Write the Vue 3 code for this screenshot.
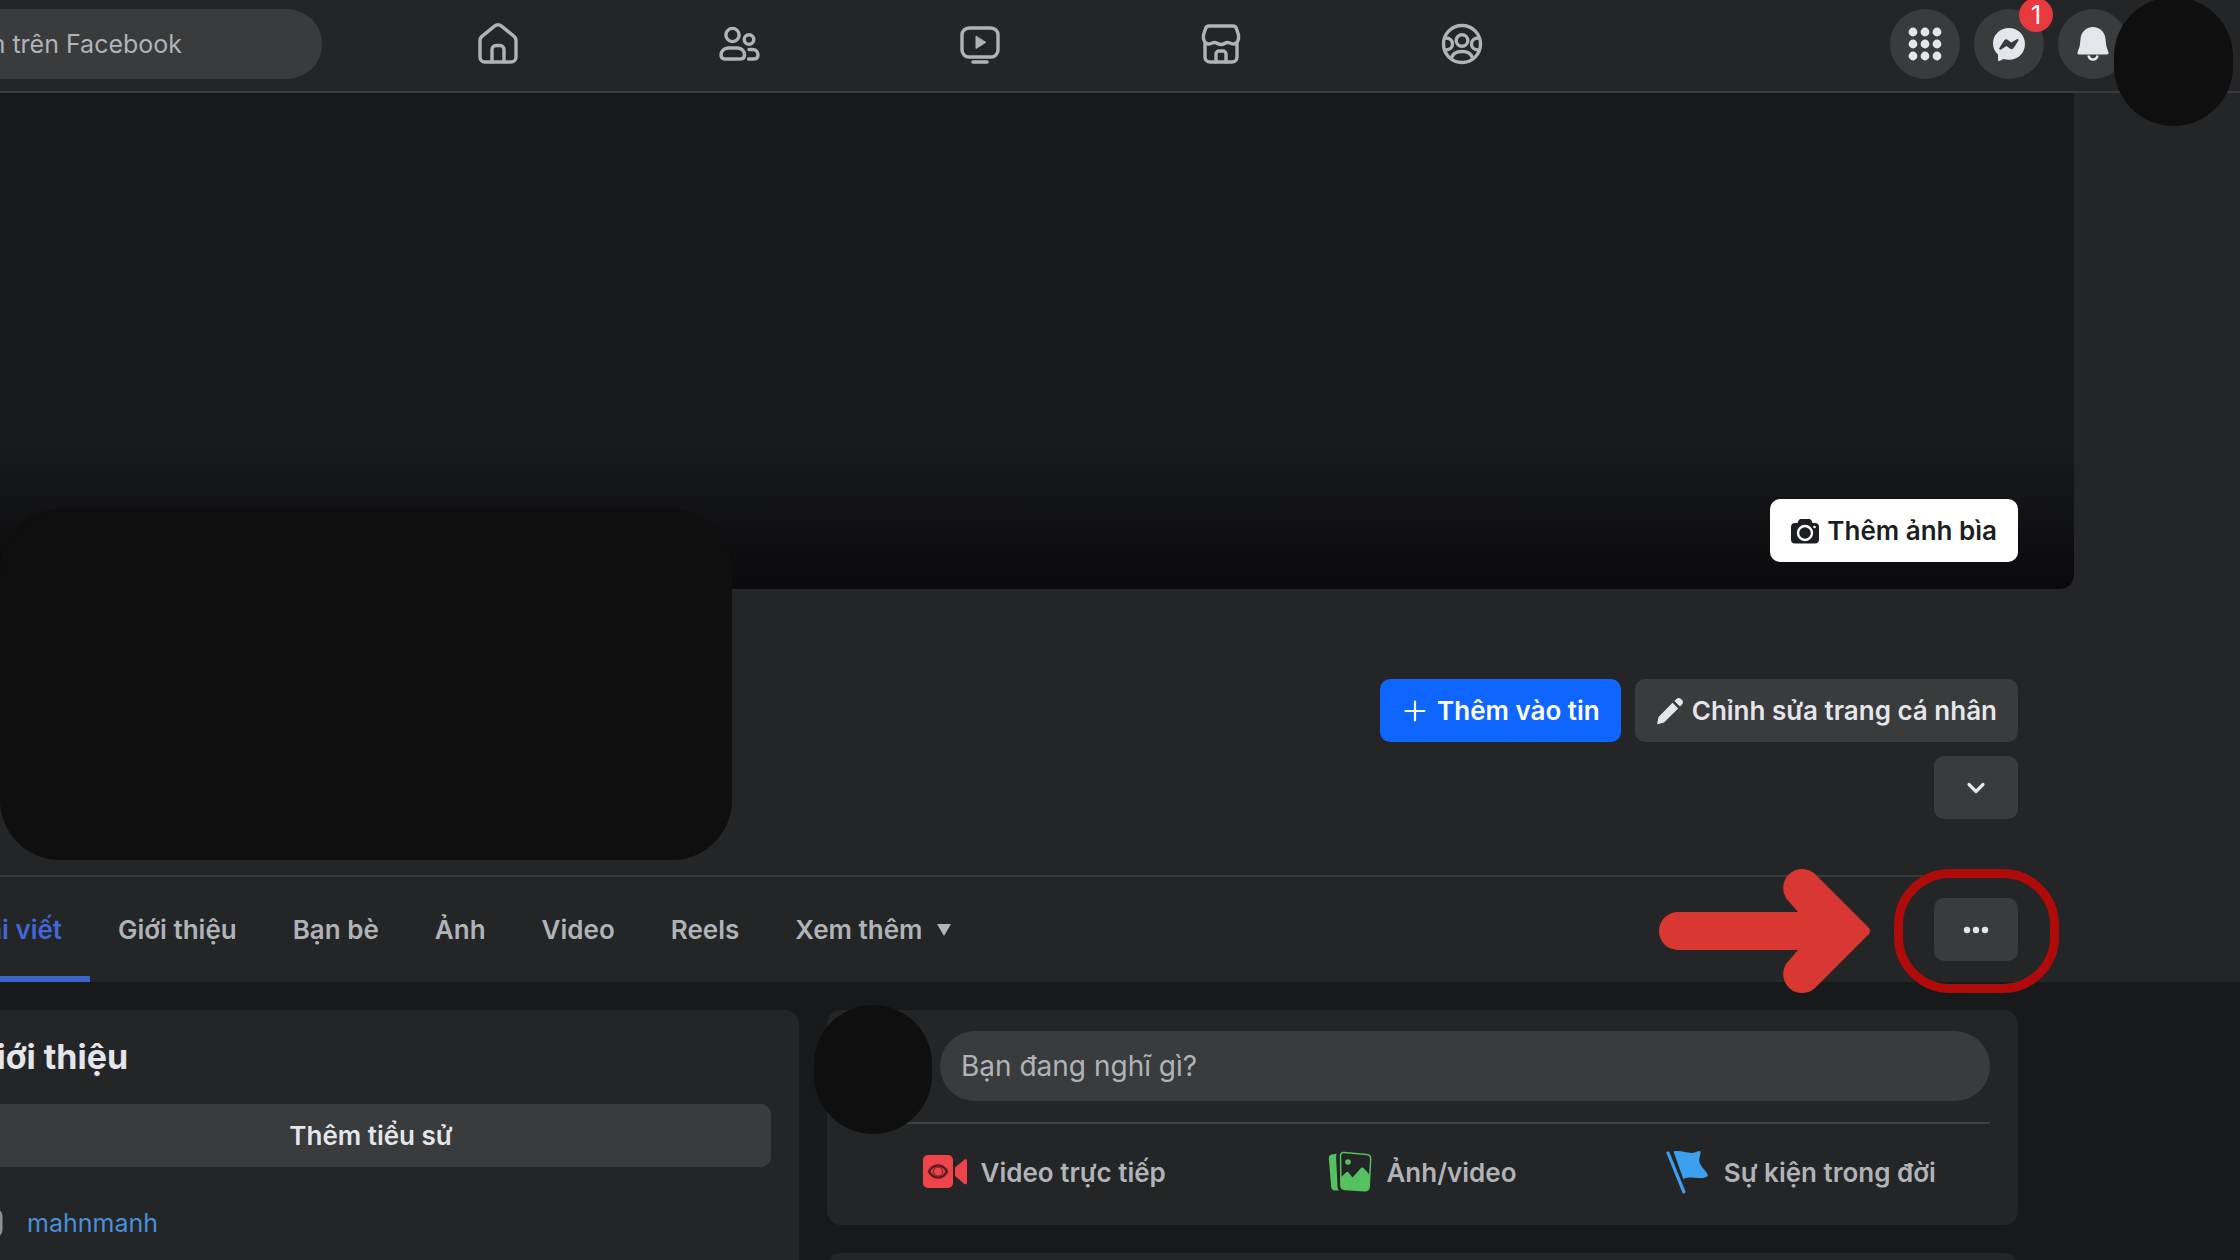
<script setup>
const navItems = [
  { id: 'home', label: 'Trang chủ' },
  { id: 'friends', label: 'Bạn bè' },
  { id: 'watch', label: 'Video' },
  { id: 'market', label: 'Marketplace' },
  { id: 'groups', label: 'Nhóm' },
]
const tabs = ['Bài viết', 'Giới thiệu', 'Bạn bè', 'Ảnh', 'Video', 'Reels']
</script>

<template>
  <div class="page">
    <header class="topbar">
      <input class="search" type="text" aria-label="Tìm kiếm trên Facebook" placeholder="Tìm kiếm trên Facebook" />
      <nav class="main-nav">
        <a v-for="n in navItems" :key="n.id" href="#" :aria-label="n.label">
          <svg viewBox="0 0 40 40" class="nav-icon">
            <g v-if="n.id === 'home'">
              <path d="M2 16.500c0-2 .9-3.500 2.500-4.700L16.500 2.200c2.200-1.700 4.800-1.700 7 0l12 9.600c1.600 1.200 2.500 2.700 2.500 4.700V33a5 5 0 0 1-5 5H7a5 5 0 0 1-5-5z" />
              <path d="M14 38V25.500a4 4 0 0 1 4-4h4a4 4 0 0 1 4 4V38" />
            </g>
            <g v-else-if="n.id === 'friends'">
              <circle cx="13.500" cy="11" r="6.600" /><circle cx="30" cy="15.500" r="4.800" />
              <path d="M9 24h9.500c4.500 0 7 3.500 7 7 0 2.500-1.500 4-4 4H6C3.500 35 2 33.500 2 31c0-3.500 3-7 7-7z" />
              <path d="M30 25.500h3.500c3.500 0 5.500 2.500 5.500 5.500 0 2.500-1.500 4-4 4h-5.500" />
            </g>
            <g v-else-if="n.id === 'watch'">
              <rect x="2" y="4" width="36" height="29" rx="7" />
              <path class="solid" d="M16 12.500v12l9.500-6z" /><path d="M13 38h14" />
            </g>
            <g v-else-if="n.id === 'market'">
              <path d="M8 2h24c1.800 0 3 1 3.500 2.800L37.500 11c.8 5-1.500 9-5 9-2.500 0-3.500-1.500-6.200-1.500-2 0-3.500 2-6.300 2s-4.300-2-6.300-2C11 18.500 10 20 7.500 20c-3.500 0-5.800-4-5-9L4.500 4.800C5 3 6.200 2 8 2z" />
              <path d="M4 20V33a5 5 0 0 0 5 5h22a5 5 0 0 0 5-5V20" />
              <path d="M15 38V30a3 3 0 0 1 3-3h4a3 3 0 0 1 3 3v8" />
            </g>
            <g v-else>
              <circle cx="20" cy="20" r="18.500" /><circle cx="20" cy="16.500" r="5.800" />
              <path d="M9.500 34c1-4 4-6.500 10.500-6.500S29.500 30 30.500 34M3.500 14c4.500 0 7 2.500 7 6s-2.500 6-7 6M36.500 14c-4.500 0-7 2.500-7 6s2.500 6 7 6" />
            </g>
          </svg>
        </a>
      </nav>
      <div class="tools">
        <button class="round" aria-label="Menu">
          <svg viewBox="0 0 32 32"><template v-for="y in [4, 16, 28]" :key="y"><circle v-for="x in [4, 16, 28]" :key="x" :cx="x" :cy="y" r="4.400" /></template></svg>
        </button>
        <button class="round" aria-label="Messenger">
          <svg viewBox="0 0 32 32"><path fill-rule="evenodd" d="M16 0C7 0 0 6.600 0 15.500c0 4.600 1.900 8.400 5 11.100V32c0 .8.700 1.200 1.500.9l4-1.800c1.700.5 3.500.7 5.500.7 9 0 16-6.500 16-15.700S25 0 16 0zM6.400 20l4.800-7.600c.8-1.200 2.300-1.500 3.400-.6l3.700 2.800 5.500-3.400c1-.6 2.200.4 1.500 1.500l-4.600 7.400c-.8 1.200-2.400 1.500-3.500.7l-3.700-2.900-5.500 3.600c-1 .6-2.200-.4-1.600-1.500z" /></svg>
          <span class="badge">1</span>
        </button>
        <button class="round" aria-label="Thông báo">
          <svg viewBox="0 0 32 34"><path d="M16 0c7 0 12 5 12.500 12l.5 5c.2 3 2 6 2.500 8.500.2 1.300-.3 2-1.500 2H2c-1.200 0-1.700-.7-1.500-2C1 23 2.800 20 3 17l.500-5C4 5 9 0 16 0z" /><path d="M11.500 28.500c.5 2.500 2.300 4 4.500 4s4-1.500 4.500-4" fill="none" stroke="#e4e6eb" stroke-width="2.500" /></svg>
        </button>
      </div>
      <div class="mask mask-account"></div>
    </header>

    <section class="profile">
      <div class="cover">
        <button class="btn btn-white">
          <svg viewBox="0 0 28 28"><path fill-rule="evenodd" d="M10 2h8c1.200 0 2 .6 2.500 1.600L21.500 6H24a4 4 0 0 1 4 4v12.500a4 4 0 0 1-4 4H4a4 4 0 0 1-4-4V10a4 4 0 0 1 4-4h2.500l1-2.400C8 2.600 8.800 2 10 2z" /><circle cx="14" cy="16" r="7" fill="none" stroke="#fff" stroke-width="2.400" /><circle cx="23.500" cy="10" r="1.300" fill="#fff" /></svg>
          Thêm ảnh bìa
        </button>
      </div>
      <div class="identity">
        <div class="mask mask-identity"></div>
        <div class="row">
          <button class="btn btn-blue">
            <svg viewBox="0 0 28 28"><path d="M14 4.500v19M4.500 14h19" stroke="#fff" stroke-width="2.200" stroke-linecap="round" /></svg>
            Thêm vào tin
          </button>
          <button class="btn">
            <svg viewBox="0 0 28 28"><path d="M2.500 20 16.500 5.800l5.700 5.700L8 25.500l-5.500 1.600c-.9.300-1.500-.3-1.200-1.200zM18.400 4l1.900-1.900c1.400-1.400 3.500-1.400 4.700-.2l1.100 1.100c1.200 1.200 1.200 3.200-.2 4.600L24 9.600z" fill="#e4e6eb" /></svg>
            Chỉnh sửa trang cá nhân
          </button>
        </div>
        <button class="btn btn-square" aria-label="Gợi ý">
          <svg viewBox="0 0 28 28"><path d="M7 10.500l7 7 7-7" fill="none" stroke="#e4e6eb" stroke-width="3.200" stroke-linecap="round" stroke-linejoin="round" /></svg>
        </button>
      </div>
      <div class="tabbar">
        <nav class="tabs">
          <a v-for="(t, i) in tabs" :key="t" href="#" :class="{ active: i === 0 }">{{ t }}</a>
          <a href="#">Xem thêm<svg viewBox="0 0 16 12" class="caret"><path d="M1 0h14L8 12z" /></svg></a>
        </nav>
        <button class="btn btn-square" aria-label="Thêm lựa chọn">
          <svg viewBox="0 0 28 28" fill="#e4e6eb"><circle cx="5" cy="14" r="3.200" /><circle cx="14" cy="14" r="3.200" /><circle cx="23" cy="14" r="3.200" /></svg>
        </button>
        <svg class="arrow" viewBox="0 0 212 128"><path d="M19 45H139L127 31A19 19 0 0 1 156 7L210 61Q212 64 210 67L156 121A19 19 0 0 1 127 97L139 83H19A19 19 0 0 1 19 45Z" /></svg>
        <div class="ring"></div>
      </div>
    </section>

    <main class="columns">
      <section class="card intro">
        <h2>Giới thiệu</h2>
        <button class="btn btn-wide">Thêm tiểu sử</button>
        <p class="link-row">
          <svg viewBox="0 0 32 32"><rect x="2" y="3" width="28" height="26" rx="6" /></svg>
          <a href="#">mahnmanh</a>
        </p>
      </section>
      <div class="feed">
        <section class="card composer">
          <div class="mask mask-avatar"></div>
          <input class="prompt" type="text" aria-label="Bạn đang nghĩ gì?" placeholder="Bạn đang nghĩ gì?" />
          <div class="actions">
            <button>
              <svg viewBox="0 0 44 44">
                <rect x="0" y="5" width="30" height="33" rx="5" fill="#f0444b" />
                <path d="M32 17.500 41.500 9.500c1-.8 2.500-.2 2.500 1.200v22c0 1.400-1.500 2-2.500 1.200L32 26z" fill="#f0444b" />
                <path d="M6 21.500c2-4 5.200-6 9-6s7 2 9 6c-2 4-5.200 6-9 6s-7-2-9-6z" fill="none" stroke="#571c20" stroke-width="2.600" />
                <circle cx="15" cy="21.500" r="4.600" fill="#f0444b" stroke="#8c2a2e" stroke-width="1.500" />
              </svg>
              Video trực tiếp
            </button>
            <button>
              <svg viewBox="0 0 44 44">
                <path d="M4 4.500 9 3.500c-.6 1-.9 2-.9 3.500L9.500 36c.1 2 .6 3.500 1.500 4.500H7c-2.200 0-3.600-1.300-3.800-3.500L.8 8.500c-.2-2.200 1-3.700 3.200-4z" fill="#55c161" />
                <path d="M16 2.500 38.500 4.500c2.700.2 4.300 2 4.200 4.500l-1.500 27.500c-.1 2.700-1.800 4.300-4.500 4.200L17 39.500c-2.500-.2-4.200-1.800-4.100-4.500L12.500 6c0-2.300 1.200-3.700 3.500-3.500z" fill="none" stroke="#55c161" stroke-width="1.500" />
                <path d="M13 27l5-4.500c1-1 2-.8 2.800.3l3.700 4.700 8-9c1.200-1.300 2.500-1.300 3.500 0l5.800 6.500-.6 11.500c-.1 2.700-1.800 4.300-4.500 4.200L17 39.500c-2.500-.2-4.200-1.800-4.100-4.500z" fill="#55c161" />
                <circle cx="20" cy="12" r="2.800" fill="#55c161" />
              </svg>
              Ảnh/video
            </button>
            <button>
              <svg viewBox="0 0 44 44" fill="#3d9ff0">
                <path d="M.3 2.800C0 1.500 2.800.8 3.300 2L19.500 41.500c.6 1.500-2.300 2.800-3.200 1z" />
                <path d="M7.500 1.500c6-1.500 13 1.500 18 1.500 3.500 0 7.500-2.800 8.800-1.700 1.200 1-1.800 6.500-.8 11 1.200 4.500 7.500 9.500 8.300 12.500.6 2.600-5 3.800-9.500 3.200-6-.8-10.500-1-15 1z" />
              </svg>
              Sự kiện trong đời
            </button>
          </div>
        </section>
        <section class="card next"></section>
      </div>
    </main>
  </div>
</template>

<style>
body {
  margin: 0;
  background: #18191a;
}
</style>

<style scoped>
.page {
  position: relative;
  height: 100vh;
  overflow: hidden;
  background: #18191a;
  color: #e4e6eb;
  font-family: Inter, "Noto Sans", sans-serif;
  font-size: 26px;
}
a { color: inherit; text-decoration: none; }
button, input {
  box-sizing: border-box;
  margin: 0;
  border: 0;
  font: inherit;
  color: inherit;
}
.mask { position: absolute; background: #0f0f0f; border-radius: 60px; }
.topbar {
  position: relative;
  display: grid;
  grid-template-columns: 378px 1fr 658px;
  align-items: center;
  height: 87px;
  padding-bottom: 4px;
  border-bottom: 2px solid #393a3b;
  background: #242526;
}
.search {
  width: 480px;
  height: 70px;
  margin-left: -158px;
  padding: 0 140px 0 0;
  border-radius: 35px;
  background: #3a3b3c;
  font-size: 25px;
  text-align: right;
}
.search::placeholder, .prompt::placeholder { color: #b0b3b8; opacity: 1; }
.main-nav { display: grid; grid-template-columns: repeat(5, 1fr); }
.main-nav a { display: flex; justify-content: center; }
.nav-icon {
  width: 40px;
  height: 40px;
  overflow: visible;
  fill: none;
  stroke: #b0b3b8;
  stroke-width: 3.4;
  stroke-linecap: round;
  stroke-linejoin: round;
}
.nav-icon .solid { fill: #b0b3b8; stroke-width: 1; }
.tools { display: flex; justify-content: flex-end; gap: 14px; padding-right: 112px; }
.round {
  position: relative;
  display: flex;
  align-items: center;
  justify-content: center;
  width: 70px;
  height: 70px;
  padding: 0;
  border-radius: 50%;
  background: #3a3b3c;
}
.round svg { width: 32px; height: 34px; fill: #e4e6eb; overflow: visible; }
.badge {
  position: absolute;
  top: -11px;
  right: -9px;
  width: 34px;
  border-radius: 17px;
  background: #e63a3f;
  color: #fff;
  font-size: 25px;
  line-height: 34px;
}
.mask-account { top: -3px; right: 7px; width: 119px; height: 129px; z-index: 2; }
.profile { background: #242526; }
.cover {
  display: flex;
  align-items: flex-end;
  justify-content: flex-end;
  box-sizing: border-box;
  height: 496px;
  margin-right: 166px;
  padding: 0 56px 27px;
  border-bottom-right-radius: 14px;
  background: linear-gradient(#18191a 72%, #0a0a0c);
}
.btn {
  display: flex;
  align-items: center;
  justify-content: center;
  gap: 8px;
  height: 63px;
  padding: 0 21px;
  border-radius: 10px;
  background: #3a3b3c;
  font-weight: 600;
  white-space: nowrap;
}
.btn svg { width: 28px; height: 28px; }
.btn-white { background: #fff; color: #1c1e21; }
.btn-white svg { fill: #1c1e21; }
.btn-blue { background: #0f66ff; color: #fff; }
.btn-square { width: 84px; }
.identity {
  position: relative;
  display: flex;
  flex-direction: column;
  align-items: flex-end;
  gap: 14px;
  padding: 90px 222px 56px 0;
}
.row { display: flex; gap: 14px; }
.mask-identity { top: -80px; left: 0; width: 732px; height: 351px; }
.tabbar {
  position: relative;
  display: flex;
  align-items: center;
  justify-content: space-between;
  height: 105px;
  margin: 0 222px 0 -58px;
  border-top: 2px solid #393a3b;
}
.tabs { display: flex; align-self: stretch; color: #b0b3b8; font-weight: 600; }
.tabs a { display: flex; align-items: center; gap: 14px; padding: 0 28px; }
.tabs .active { color: #4267d8; box-shadow: inset 0 -6px #3b63c9; }
.caret { width: 16px; height: 12px; fill: #b0b3b8; }
.arrow { position: absolute; top: -10px; right: 147px; width: 212px; height: 128px; fill: #d93832; }
.ring {
  position: absolute;
  top: -8px;
  right: -41px;
  box-sizing: border-box;
  width: 165px;
  height: 124px;
  border: 9px solid #b00b0b;
  border-radius: 56px;
}
.columns {
  display: grid;
  grid-template-columns: 856px 1fr;
  gap: 28px;
  margin: 28px 222px 0 -57px;
}
.card { border-radius: 14px; background: #242526; }
.intro { padding: 28px; }
h2 { margin: 0 0 28px; font-size: 34px; line-height: 38px; }
.btn-wide { width: 100%; }
.link-row { display: flex; align-items: center; gap: 24px; margin: 40px 0; font-size: 25px; }
.link-row svg { width: 32px; height: 32px; fill: none; stroke: #8c9096; stroke-width: 3; }
.link-row a { color: #4a8fd8; }
.feed { display: grid; gap: 28px; }
.composer { position: relative; padding: 21px 28px 18px; }
.mask-avatar { top: -5px; left: -13px; width: 118px; height: 129px; }
.prompt {
  display: block;
  width: calc(100% - 85px);
  height: 70px;
  margin: 0 0 21px 85px;
  padding: 0 21px;
  border-radius: 35px;
  background: #3a3b3c;
  font-size: 28px;
}
.actions {
  display: grid;
  grid-template-columns: repeat(3, 1fr);
  padding-top: 13px;
  border-top: 2px solid #3e4042;
}
.actions button {
  display: flex;
  align-items: center;
  justify-content: center;
  gap: 14px;
  height: 70px;
  padding: 0;
  background: none;
  color: #b0b3b8;
  font-weight: 600;
}
.actions svg { width: 44px; height: 44px; }
.next { height: 200px; }
</style>
